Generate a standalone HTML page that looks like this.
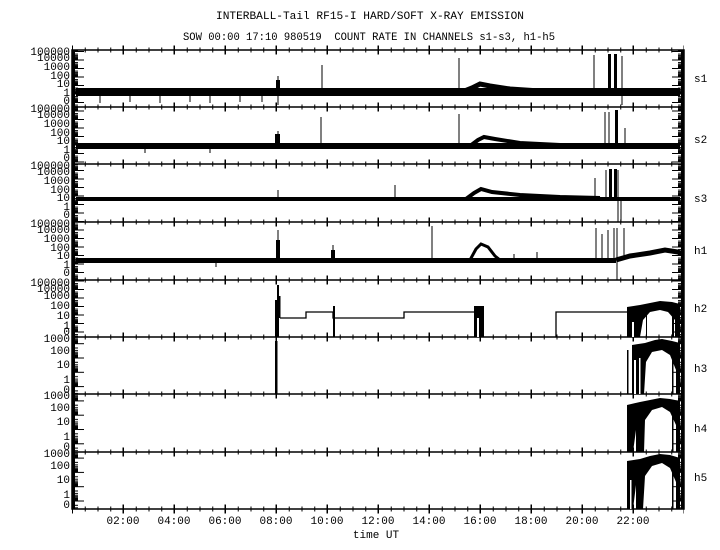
<!DOCTYPE html>
<html><head><meta charset="utf-8"><style>
html,body{margin:0;padding:0;background:#fff;}
svg{display:block;}
text{font-family:"Liberation Mono","DejaVu Sans Mono",monospace;font-size:11px;fill:#000;}
</style></head><body>
<svg width="720" height="550" viewBox="0 0 720 550" xmlns="http://www.w3.org/2000/svg">
<defs>
<pattern id="logS" patternUnits="userSpaceOnUse" x="0" y="0" width="12" height="8.5">
<rect x="0" y="0" width="12" height="1" fill="#000"/>
<rect x="0" y="2.6" width="6" height="1" fill="#000"/>
<rect x="0" y="4.1" width="6" height="1" fill="#000"/>
<rect x="0" y="5.2" width="6" height="1" fill="#000"/>
<rect x="0" y="6.1" width="6" height="2.4" fill="#000"/>
</pattern>
<pattern id="logL" patternUnits="userSpaceOnUse" x="0" y="0" width="12" height="14.3">
<rect x="0" y="0" width="12" height="1" fill="#000"/>
<rect x="0" y="4.3" width="6" height="1" fill="#000"/>
<rect x="0" y="6.8" width="6" height="1" fill="#000"/>
<rect x="0" y="8.6" width="6" height="1" fill="#000"/>
<rect x="0" y="10" width="6" height="1" fill="#000"/>
<rect x="0" y="11.1" width="6" height="3.2" fill="#000"/>
</pattern>
</defs>

<text x="370" y="19" text-anchor="middle" textLength="308" lengthAdjust="spacingAndGlyphs">INTERBALL-Tail RF15-I HARD/SOFT X-RAY EMISSION</text>
<text x="369" y="40" text-anchor="middle" textLength="372" lengthAdjust="spacingAndGlyphs" xml:space="preserve">SOW 00:00 17:10 980519  COUNT RATE IN CHANNELS s1-s3, h1-h5</text>

<rect x="72" y="50" width="612" height="459" fill="none" stroke="#000" stroke-width="1.5"/>
<g stroke="#000" stroke-width="1.5">
<line x1="72" y1="107" x2="684" y2="107"/><line x1="72" y1="164" x2="684" y2="164"/>
<line x1="72" y1="222" x2="684" y2="222"/><line x1="72" y1="280" x2="684" y2="280"/>
<line x1="72" y1="337" x2="684" y2="337"/><line x1="72" y1="394" x2="684" y2="394"/>
<line x1="72" y1="452" x2="684" y2="452"/>
</g>
<g stroke="#000" stroke-width="1">
<g stroke-dasharray="1 11.75" stroke-dashoffset="-12.75">
<line x1="72" y1="50" x2="684" y2="50" stroke-width="5"/>
<line x1="72" y1="107" x2="684" y2="107" stroke-width="5"/>
<line x1="72" y1="164" x2="684" y2="164" stroke-width="5"/>
<line x1="72" y1="222" x2="684" y2="222" stroke-width="5"/>
<line x1="72" y1="280" x2="684" y2="280" stroke-width="5"/>
<line x1="72" y1="337" x2="684" y2="337" stroke-width="5"/>
<line x1="72" y1="394" x2="684" y2="394" stroke-width="5"/>
<line x1="72" y1="452" x2="684" y2="452" stroke-width="5"/>
<line x1="72" y1="509" x2="684" y2="509" stroke-width="5"/>
</g>
<g stroke-dasharray="1.5 49.5" stroke-dashoffset="-50.5">
<line x1="72" y1="50" x2="684" y2="50" stroke-width="9"/>
<line x1="72" y1="107" x2="684" y2="107" stroke-width="9"/>
<line x1="72" y1="164" x2="684" y2="164" stroke-width="9"/>
<line x1="72" y1="222" x2="684" y2="222" stroke-width="9"/>
<line x1="72" y1="280" x2="684" y2="280" stroke-width="9"/>
<line x1="72" y1="337" x2="684" y2="337" stroke-width="9"/>
<line x1="72" y1="394" x2="684" y2="394" stroke-width="9"/>
<line x1="72" y1="452" x2="684" y2="452" stroke-width="9"/>
<line x1="72" y1="509" x2="684" y2="509" stroke-width="9"/>
</g>
</g>
<rect x="72" y="50" width="12" height="172" fill="url(#logS)"/>
<rect x="672" y="50" width="12" height="172" fill="url(#logS)" transform="translate(1356,0) scale(-1,1)"/>
<rect x="72" y="222" width="12" height="58" fill="url(#logS)"/>
<rect x="672" y="222" width="12" height="58" transform="translate(1356,0) scale(-1,1)" fill="url(#logS)"/>
<rect x="72" y="280" width="12" height="57" fill="url(#logS)"/>
<rect x="672" y="280" width="12" height="57" transform="translate(1356,0) scale(-1,1)" fill="url(#logS)"/>
<rect x="72" y="337" width="12" height="172" fill="url(#logL)"/>
<rect x="672" y="337" width="12" height="172" transform="translate(1356,0) scale(-1,1)" fill="url(#logL)"/>
<rect x="72" y="50" width="3" height="459" fill="#000"/>
<rect x="681" y="50" width="3" height="459" fill="#000"/>

<g text-anchor="end">
<g><text x="70" y="55">100000</text><text x="70" y="61">10000</text><text x="70" y="70">1000</text><text x="70" y="79">100</text><text x="70" y="87">10</text><text x="70" y="96">1</text><text x="70" y="104">0</text></g>
<g transform="translate(0,57)"><text x="70" y="55">100000</text><text x="70" y="61">10000</text><text x="70" y="70">1000</text><text x="70" y="79">100</text><text x="70" y="87">10</text><text x="70" y="96">1</text><text x="70" y="104">0</text></g>
<g transform="translate(0,114)"><text x="70" y="55">100000</text><text x="70" y="61">10000</text><text x="70" y="70">1000</text><text x="70" y="79">100</text><text x="70" y="87">10</text><text x="70" y="96">1</text><text x="70" y="104">0</text></g>
<g transform="translate(0,172)"><text x="70" y="55">100000</text><text x="70" y="61">10000</text><text x="70" y="70">1000</text><text x="70" y="79">100</text><text x="70" y="87">10</text><text x="70" y="96">1</text><text x="70" y="104">0</text></g>
<text x="70" y="286">100000</text><text x="70" y="292">10000</text><text x="70" y="299">1000</text><text x="70" y="309">100</text><text x="70" y="319">10</text><text x="70" y="329">1</text><text x="70" y="335">0</text>
<g><text x="70" y="342">1000</text><text x="70" y="354">100</text><text x="70" y="368">10</text><text x="70" y="383">1</text><text x="70" y="393">0</text></g>
<g transform="translate(0,57)"><text x="70" y="342">1000</text><text x="70" y="354">100</text><text x="70" y="368">10</text><text x="70" y="383">1</text><text x="70" y="393">0</text></g>
<g transform="translate(0,115)"><text x="70" y="342">1000</text><text x="70" y="354">100</text><text x="70" y="368">10</text><text x="70" y="383">1</text><text x="70" y="393">0</text></g>
</g>
<text x="694" y="82">s1</text><text x="694" y="143">s2</text><text x="694" y="202">s3</text><text x="694" y="254">h1</text>
<text x="694" y="312">h2</text><text x="694" y="372">h3</text><text x="694" y="432">h4</text><text x="694" y="481">h5</text>
<g text-anchor="middle">
<text x="123" y="524">02:00</text><text x="174" y="524">04:00</text><text x="225" y="524">06:00</text><text x="276" y="524">08:00</text><text x="327" y="524">10:00</text><text x="378" y="524">12:00</text><text x="429" y="524">14:00</text><text x="480" y="524">16:00</text><text x="531" y="524">18:00</text><text x="582" y="524">20:00</text><text x="633" y="524">22:00</text>
<text x="376" y="538">time UT</text>
</g>

<g fill="#000" stroke="#000">
<rect x="76" y="88" width="604" height="8" stroke="none"/>
<g stroke-width="1">
<line x1="100" y1="96" x2="100" y2="103"/><line x1="130" y1="96" x2="130" y2="102"/><line x1="160" y1="96" x2="160" y2="103"/><line x1="190" y1="96" x2="190" y2="102"/><line x1="210" y1="96" x2="210" y2="103"/><line x1="240" y1="96" x2="240" y2="102"/><line x1="262" y1="96" x2="262" y2="102"/>
<line x1="278" y1="76" x2="278" y2="105"/><line x1="322" y1="65" x2="322" y2="90"/><line x1="459" y1="58" x2="459" y2="90"/>
<line x1="594" y1="55" x2="594" y2="90"/><line x1="622" y1="56" x2="622" y2="105"/>
</g>
<rect x="276" y="80" width="4" height="10" stroke="none"/>
<rect x="608" y="54" width="3" height="36" stroke="none"/><rect x="614" y="54" width="3" height="36" stroke="none"/>
<polyline points="462,92 472,88 480,84 490,86 510,89 540,91 580,92" fill="none" stroke-width="5"/>

<rect x="76" y="143" width="604" height="6" stroke="none"/>
<g stroke-width="1">
<line x1="278" y1="131" x2="278" y2="149"/><line x1="321" y1="117" x2="321" y2="146"/><line x1="459" y1="114" x2="459" y2="146"/>
<line x1="605" y1="112" x2="605" y2="146"/><line x1="609" y1="112" x2="609" y2="146"/><line x1="625" y1="128" x2="625" y2="146"/>
<line x1="145" y1="149" x2="145" y2="153"/><line x1="210" y1="149" x2="210" y2="153"/>
</g>
<rect x="275" y="134" width="5" height="10" stroke="none"/>
<rect x="615" y="110" width="3" height="36" stroke="none"/>
<polyline points="470,146 478,140 484,137 495,139 520,143 560,145 600,146" fill="none" stroke-width="4"/>

<rect x="76" y="197" width="604" height="4" stroke="none"/>
<g stroke-width="1">
<line x1="278" y1="190" x2="278" y2="200"/><line x1="395" y1="185" x2="395" y2="199"/>
<line x1="595" y1="178" x2="595" y2="199"/><line x1="606" y1="170" x2="606" y2="199"/><line x1="618" y1="170" x2="618" y2="222"/><line x1="621" y1="198" x2="621" y2="222"/>
</g>
<rect x="609" y="169" width="3" height="30" stroke="none"/><rect x="614" y="169" width="3" height="30" stroke="none"/>
<polyline points="466,199 474,193 481,189 492,192 520,195 560,197 600,198" fill="none" stroke-width="4"/>

<rect x="76" y="258" width="540" height="5" stroke="none"/>
<polyline points="616,260 630,256 650,253 665,250 678,252 682,254" fill="none" stroke-width="5"/>
<g stroke-width="1">
<line x1="278" y1="230" x2="278" y2="262"/><line x1="333" y1="245" x2="333" y2="260"/><line x1="432" y1="226" x2="432" y2="260"/><line x1="216" y1="262" x2="216" y2="267"/>
<line x1="596" y1="228" x2="596" y2="260"/><line x1="602" y1="234" x2="602" y2="260"/><line x1="608" y1="230" x2="608" y2="260"/><line x1="614" y1="228" x2="614" y2="260"/><line x1="617" y1="228" x2="617" y2="280"/><line x1="624" y1="228" x2="624" y2="260"/>
<line x1="537" y1="252" x2="537" y2="260"/><line x1="514" y1="254" x2="514" y2="260"/>
</g>
<rect x="276" y="240" width="4" height="20" stroke="none"/><rect x="331" y="250" width="4" height="10" stroke="none"/>
<polyline points="470,260 476,249 481,244 488,247 495,256 500,260" fill="none" stroke-width="3"/>

<g stroke-width="1.3" fill="none">
<polyline points="280,318 306,318 306,312 333,312 333,318 404,318 404,312 474,312"/>
<polyline points="556,337 556,312 627,312"/>
</g>
<rect x="275" y="300" width="2" height="37" stroke="none"/><rect x="277" y="285" width="2" height="52" stroke="none"/><rect x="279" y="296" width="1.5" height="22" stroke="none"/>
<rect x="333" y="306" width="2" height="31" stroke="none"/>
<rect x="474" y="306" width="10" height="31" stroke="none"/><rect x="477" y="318" width="2" height="19" fill="#fff" stroke="none"/>
<path d="M627,337 L627,307 L640,305 L650,303 L660,301 L672,302 L680,304 L680,337 L675,337 L675,320 L668,312 L660,310 L650,312 L643,320 L640,337 Z" stroke="none"/>
<rect x="646" y="315" width="1" height="22" stroke="none"/><rect x="672" y="315" width="2" height="22" stroke="none"/><rect x="632" y="322" width="2" height="15" fill="#fff" stroke="none"/>

<rect x="275" y="341" width="2.5" height="53" stroke="none"/>
<rect x="627" y="350" width="1.5" height="44" stroke="none"/>
<path d="M632,394 L632,345 L645,343 L655,340 L662,339 L672,341 L680,343 L680,394 L676,394 L676,370 L670,355 L662,350 L652,352 L646,362 L644,394 Z" stroke="none"/>
<rect x="634" y="360" width="2" height="34" fill="#fff" stroke="none"/><rect x="639" y="358" width="1.5" height="36" fill="#fff" stroke="none"/>
<rect x="672" y="360" width="1.5" height="34" stroke="none"/>

<path d="M627,452 L627,405 L640,402 L650,400 L660,398 L670,399 L680,401 L680,452 L676,452 L676,425 L670,412 L662,407 L652,410 L645,420 L644,452 L636,452 L636,430 L633,452 Z" stroke="none"/>
<rect x="672" y="415" width="1.5" height="37" stroke="none"/>

<path d="M627,509 L627,461 L640,459 L650,456 L660,454 L670,455 L680,458 L680,509 L676,509 L676,482 L670,468 L662,463 L652,466 L645,476 L643,509 L636,509 L636,485 L633,509 Z" stroke="none"/>
<rect x="672" y="470" width="1.5" height="39" stroke="none"/><rect x="630" y="480" width="1.5" height="29" fill="#fff" stroke="none"/>
</g>
</svg>
</body></html>
